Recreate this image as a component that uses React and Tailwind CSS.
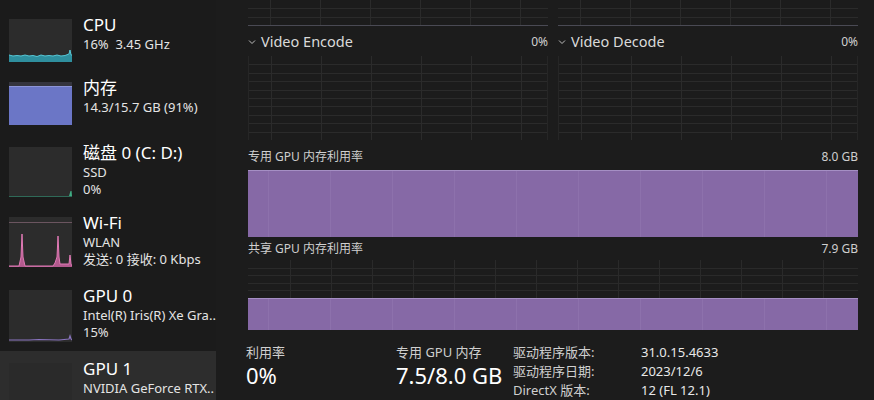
import React from "react";

const Grid = ({ w, h, step = 8.4, colStep = 50, colOffset = 22, color = "#2b2b2b" }) => {
  const cols = [];
  for (let x = colOffset; x < w; x += colStep) cols.push(x);
  const rows = [];
  for (let y = h - step; y > 0.5; y -= step) rows.push(Math.round(y));
  return (
    <svg width={w} height={h} className="block">
      {cols.map((x) => (
        <line key={"c" + x} x1={x + 0.5} x2={x + 0.5} y1={0} y2={h} stroke={color} />
      ))}
      {rows.map((y) => (
        <line key={"r" + y} x1={0} x2={w} y1={y + 0.5} y2={y + 0.5} stroke={color} />
      ))}
    </svg>
  );
};

const Chevron = () => (
  <svg width="8" height="6" viewBox="0 0 8 6" className="shrink-0">
    <polyline points="1,1.5 4,4.5 7,1.5" fill="none" stroke="#bdbdbd" strokeWidth="1" />
  </svg>
);

const CpuThumb = () => (
  <svg width="63" height="43" className="block">
    <rect width="63" height="43" fill="#2c2c2c" />
    <polygon
      points="0,36 4,37 8,36.5 12,37 16,36 20,37 24,36.5 28,37.5 32,36 36,37 40,36.5 44,37 48,36 52,37 56,36.5 60,35 61,31 62,36 63,36 63,43 0,43"
      fill="#2f8f9e"
    />
    <polyline
      points="0,36 4,37 8,36.5 12,37 16,36 20,37 24,36.5 28,37.5 32,36 36,37 40,36.5 44,37 48,36 52,37 56,36.5 60,35 61,31 62,36 63,36"
      fill="none"
      stroke="#56c8d6"
      strokeWidth="1"
    />
  </svg>
);

const MemThumb = () => (
  <svg width="63" height="43" className="block">
    <rect width="63" height="43" fill="#34343d" />
    <rect y="4" width="63" height="39" fill="#6b76c6" />
    <line x1="0" x2="63" y1="4.5" y2="4.5" stroke="#8d95d8" />
  </svg>
);

const DiskThumb = () => (
  <svg width="63" height="50" className="block">
    <rect width="63" height="50" fill="#2c2c2c" />
    <line x1="0" x2="63" y1="49.5" y2="49.5" stroke="#2f6a58" />
    <polygon points="60,49 61.5,44 62.5,44 63,49" fill="#3fae84" />
  </svg>
);

const WifiThumb = () => (
  <svg width="63" height="50" className="block">
    <rect width="63" height="50" fill="#2c2c2c" />
    <line x1="0" x2="63" y1="5.5" y2="5.5" stroke="#6b5560" />
    <polygon
      points="0,49 10,49 12,40 13,17 14,40 16,49 44,49 46,46 48,40 49,19 50,40 51,47 60,47 61,38 62,47 63,49 63,50 0,50"
      fill="#b35a8e"
    />
    <polyline
      points="0,49 10,49 12,40 13,17 14,40 16,49 44,49 46,46 48,40 49,19 50,40 51,47 60,47 61,38 62,47 63,49"
      fill="none"
      stroke="#e07ab5"
      strokeWidth="1"
    />
  </svg>
);

const Gpu0Thumb = () => (
  <svg width="63" height="52" className="block">
    <rect width="63" height="52" fill="#2c2c2c" />
    <polyline
      points="0,50 20,50 30,49.5 50,50 60,49 61,46 62,49 63,50"
      fill="none"
      stroke="#8a74c0"
      strokeWidth="1.2"
    />
  </svg>
);

const Gpu1Thumb = () => (
  <svg width="63" height="50" className="block">
    <rect width="63" height="50" fill="#2a2a2a" />
  </svg>
);

const items = [
  { h: "h-[63px]", thumb: <CpuThumb />, title: "CPU", lines: ["16%  3.45 GHz"] },
  { h: "h-[65px]", thumb: <MemThumb />, title: "内存", lines: ["14.3/15.7 GB (91%)"] },
  { h: "h-[70px]", thumb: <DiskThumb />, title: "磁盘 0 (C: D:)", lines: ["SSD", "0%"] },
  { h: "h-[73px]", thumb: <WifiThumb />, title: "Wi-Fi", lines: ["WLAN", "发送: 0 接收: 0 Kbps"] },
  { h: "h-[73px]", thumb: <Gpu0Thumb />, title: "GPU 0", lines: ["Intel(R) Iris(R) Xe Gra..", "15%"] },
  {
    h: "h-[73px]",
    thumb: <Gpu1Thumb />,
    title: "GPU 1",
    lines: ["NVIDIA GeForce RTX..", "0% (47 °C)"],
    active: true,
  },
];

const Sidebar = () => (
  <aside className="w-[216px] shrink-0 flex flex-col pt-[7px] bg-[#1b1b1b] overflow-hidden">
    {items.map((it) => (
      <div
        key={it.title}
        className={`${it.h} shrink-0 flex items-start pl-[9px] pt-[7px] ${it.active ? "bg-[#2d2d2d]" : ""}`}
      >
        <div className="mt-[5px] shrink-0">{it.thumb}</div>
        <div className="ml-[11px] flex flex-col min-w-0">
          <div className="h-[22px] text-[17px] leading-[22px] text-white whitespace-nowrap">{it.title}</div>
          {it.lines.map((l) => (
            <div key={l} className="h-[17px] text-[13px] leading-[17px] text-[#e4e4e4] whitespace-pre">
              {l}
            </div>
          ))}
        </div>
      </div>
    ))}
  </aside>
);

const EngineHeader = ({ name, value }) => (
  <div className="h-[30px] shrink-0 flex items-center pt-[1px]">
    <Chevron />
    <span className="ml-[5px] text-[14.5px] text-[#dadada]">{name}</span>
    <span className="ml-auto text-[12px] text-[#d0d0d0]">{value}</span>
  </div>
);

const PurpleBar = ({ h }) => (
  <div className={`${h} shrink-0 bg-[#8669a6] border-t border-[#a58fc4] overflow-hidden`}>
    <Grid w={610} h={80} step={1000} colStep={62} colOffset={20} color="#8d71ac" />
  </div>
);

const Main = () => (
  <main className="flex-1 pl-[32px] pr-[16px] flex flex-col bg-[#1c1c1c] min-w-0 overflow-hidden">
    {/* top strip */}
    <div className="grid grid-cols-2 gap-[10px] shrink-0">
      <div className="h-[26px] border-b border-[#4a4a54] overflow-hidden flex flex-col justify-end">
        <Grid w={300} h={25} />
      </div>
      <div className="h-[26px] border-b border-[#4a4a54] overflow-hidden flex flex-col justify-end">
        <Grid w={300} h={25} />
      </div>
    </div>

    {/* engines */}
    <div className="grid grid-cols-2 gap-[10px] shrink-0">
      <div className="flex flex-col">
        <EngineHeader name="Video Encode" value="0%" />
        <div className="h-[84px] shrink-0 border-x border-[#262626]">
          <Grid w={298} h={84} />
        </div>
      </div>
      <div className="flex flex-col">
        <EngineHeader name="Video Decode" value="0%" />
        <div className="h-[84px] shrink-0 border-x border-[#262626]">
          <Grid w={298} h={84} />
        </div>
      </div>
    </div>

    {/* dedicated memory */}
    <div className="h-[30px] shrink-0 flex items-end justify-between pb-[5px] text-[12px] leading-[16px] text-[#cfcfcf]">
      <span>专用 GPU 内存利用率</span>
      <span>8.0 GB</span>
    </div>
    <PurpleBar h="h-[67px]" />

    {/* shared memory */}
    <div className="h-[23px] shrink-0 flex items-end justify-between pb-[3px] text-[12px] leading-[16px] text-[#cfcfcf]">
      <span>共享 GPU 内存利用率</span>
      <span>7.9 GB</span>
    </div>
    <div className="h-[70px] shrink-0 flex flex-col">
      <div className="h-[38px] shrink-0 overflow-hidden">
        <Grid w={610} h={38} step={7.6} colStep={41} colOffset={42} color="#2a2a2a" />
      </div>
      <PurpleBar h="h-[32px]" />
    </div>

    {/* stats */}
    <div className="flex shrink-0 pt-[13px] -ml-[2px]">
      <div className="w-[150px] shrink-0 flex flex-col">
        <span className="h-[19px] text-[13px] leading-[19px] text-[#cfcfcf]">利用率</span>
        <span className="h-[26px] text-[22px] leading-[26px] text-white">0%</span>
        <span className="mt-[10px] h-[19px] text-[13px] leading-[19px] text-[#cfcfcf]">共享 GPU 内存</span>
      </div>
      <div className="w-[117px] shrink-0 flex flex-col">
        <span className="h-[19px] text-[13px] leading-[19px] text-[#cfcfcf]">专用 GPU 内存</span>
        <span className="h-[26px] text-[22px] leading-[26px] text-white whitespace-nowrap">7.5/8.0 GB</span>
        <span className="mt-[10px] h-[19px] text-[13px] leading-[19px] text-[#cfcfcf]">GPU 内存</span>
      </div>
      <div className="grid grid-cols-[128px_auto] auto-rows-[19px] text-[13px] leading-[19px]">
        <span className="text-[#cfcfcf]">驱动程序版本:</span>
        <span className="text-[#e8e8e8]">31.0.15.4633</span>
        <span className="text-[#cfcfcf]">驱动程序日期:</span>
        <span className="text-[#e8e8e8]">2023/12/6</span>
        <span className="text-[#cfcfcf]">DirectX 版本:</span>
        <span className="text-[#e8e8e8]">12 (FL 12.1)</span>
      </div>
    </div>
  </main>
);

export default function App() {
  return (
    <div className="w-[874px] h-[400px] overflow-hidden flex font-['Noto_Sans','Noto_Sans_CJK_SC',sans-serif]">
      <Sidebar />
      <Main />
    </div>
  );
}
